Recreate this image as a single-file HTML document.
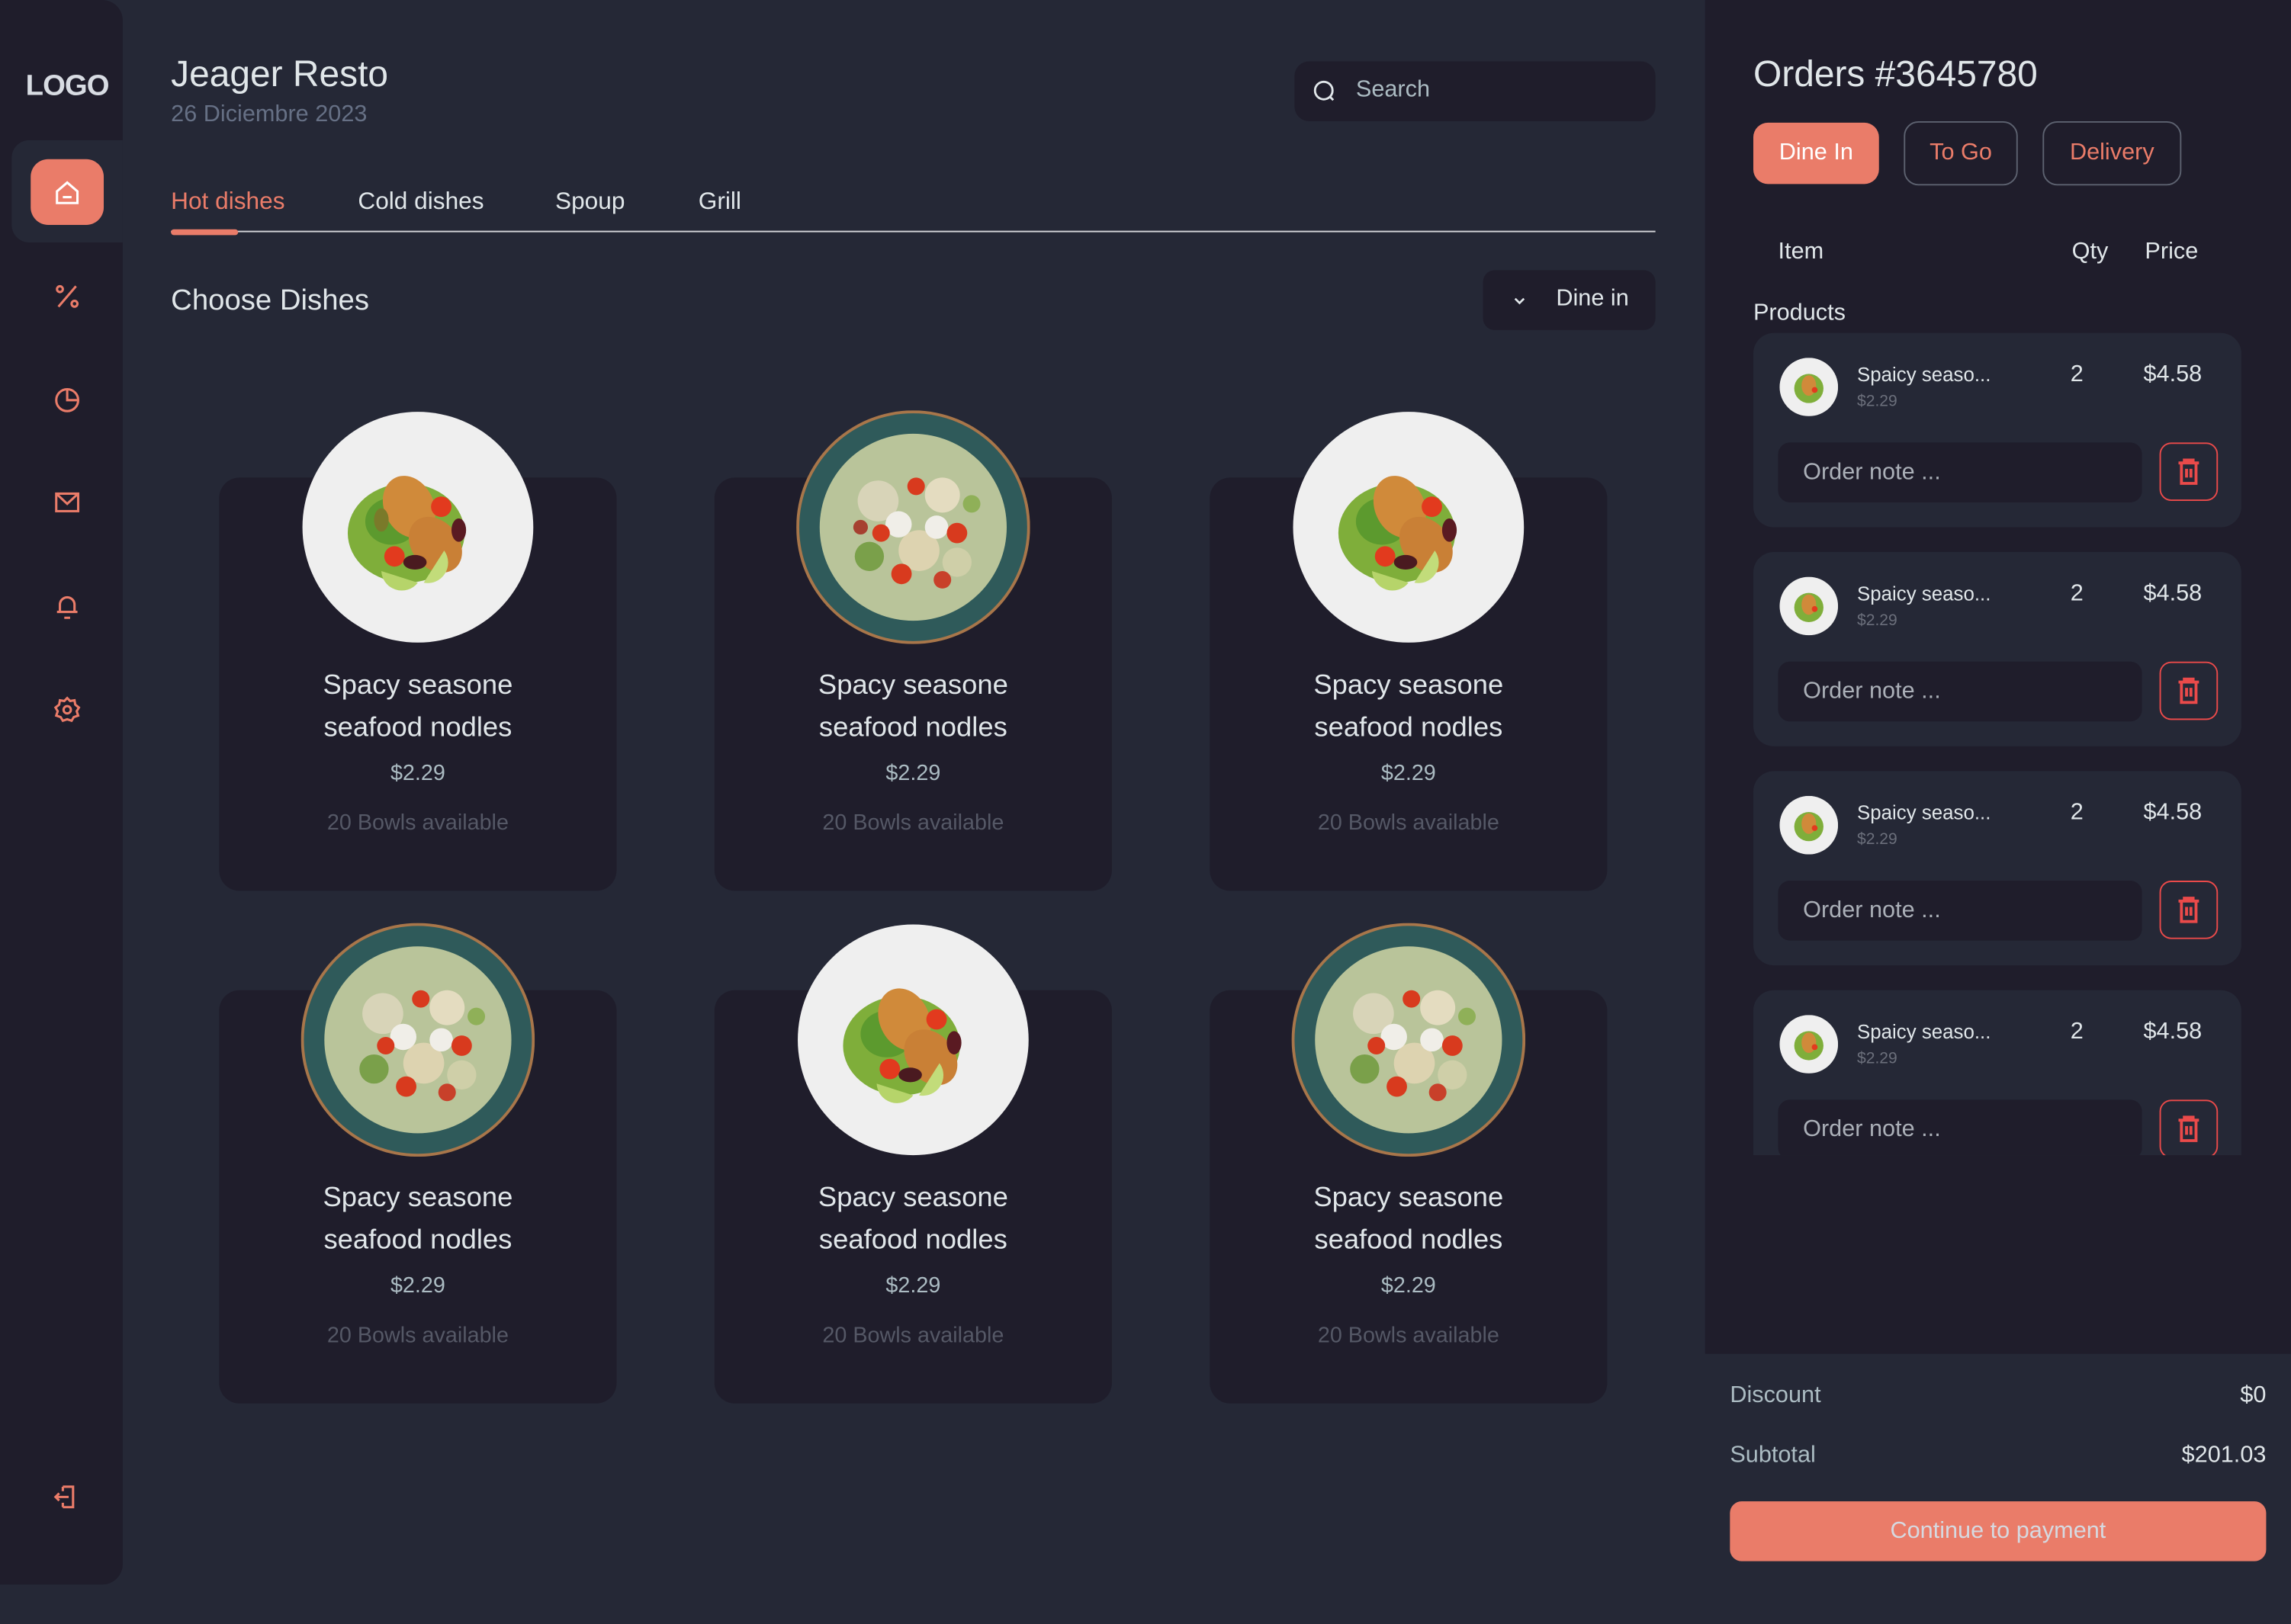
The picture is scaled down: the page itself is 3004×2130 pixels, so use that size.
<!DOCTYPE html>
<html><head><meta charset="utf-8"><style>
*{margin:0;padding:0;box-sizing:border-box}
html,body{width:3004px;height:2130px;overflow:hidden;background:#252836}
#w{position:absolute;left:0;top:0;width:1568px;height:1112px;transform:scale(1.91582,1.91547);transform-origin:0 0;font-family:"Liberation Sans",sans-serif;color:#e0e6e9;background:#252836}
.a{position:absolute}
.side{left:0;top:0;width:84px;height:1085px;background:#1f1d2b;border-radius:0 14px 14px 0}
.ic{position:absolute;left:36px;width:20px;height:20px}
.card{position:absolute;width:272px;height:283px;background:#1f1d2b;border-radius:14px}
.plate{position:absolute;width:160px;height:160px;left:56px;top:-46px}
.t{position:absolute;left:0;width:100%;text-align:center}
.t1{top:128px;font-size:19px;line-height:29px;color:#e0e6e9}
.t2{top:194px;font-size:15px;color:#abbbc2}
.t3{top:228px;font-size:15px;color:#555866}
.oc{position:absolute;left:1200px;width:334px;height:133px;background:#252836;border-radius:14px}
.oc .th{position:absolute;left:18px;top:17px;width:40px;height:40px}
.oc .n{position:absolute;left:71px;top:21px;font-size:13.5px;color:#e0e6e9}
.oc .p{position:absolute;left:71px;top:41px;font-size:11px;color:#6b6f7b}
.oc .q{position:absolute;left:217px;top:20px;font-size:16px}
.oc .pr{position:absolute;left:267px;top:20px;font-size:16px}
.oc .note{position:absolute;left:17px;top:75px;width:249px;height:41px;background:#1f1d2b;border-radius:8px;font-size:16px;color:#abb0b8;padding:12px 0 0 17px}
.oc .del{position:absolute;left:278px;top:75px;width:40px;height:40px;border:1px solid #ea4a4a;border-radius:8px}
</style></head><body><div id="w">

<div class="a side"></div>
<div class="a" style="left:0;top:48px;width:92px;text-align:center;font-weight:bold;font-size:20px;color:#d8dce3;letter-spacing:-0.5px">LOGO</div>
<div class="a" style="left:8px;top:96px;width:76px;height:70px;background:#252836;border-radius:12px 0 0 12px"></div>
<div class="a" style="left:21px;top:109px;width:50px;height:45px;background:#ea7c69;border-radius:12px"></div>
<svg class="a" style="left:36px;top:122px" width="20" height="20" viewBox="0 0 20 20" fill="none" stroke="#fff" stroke-width="1.6"><path d="M3 9 L10 3 L17 9 V17 H3 Z"/><path d="M7 13 H13"/></svg>
<svg class="ic" style="top:193px" viewBox="0 0 20 20" fill="none" stroke="#ea7c69" stroke-width="1.6"><circle cx="5" cy="5" r="2"/><circle cx="15" cy="15" r="2"/><path d="M16 3 L4 17"/></svg>
<svg class="ic" style="top:263px" viewBox="0 0 20 20" fill="none" stroke="#ea7c69" stroke-width="1.6"><circle cx="10" cy="11" r="7.5"/><path d="M10 3.5 V11 H17.5"/></svg>
<svg class="ic" style="top:334px" viewBox="0 0 20 20" fill="none" stroke="#ea7c69" stroke-width="1.6"><rect x="2.5" y="4" width="15" height="12"/><path d="M2.5 4 L10 11 L17.5 4"/></svg>
<svg class="ic" style="top:405px" viewBox="0 0 20 20" fill="none" stroke="#ea7c69" stroke-width="1.6"><path d="M5 14 V9 A5 5 0 0 1 15 9 V14 M3 14 H17 M8 18 H12"/></svg>
<svg class="ic" style="top:476px" viewBox="0 0 20 20" fill="none" stroke="#ea7c69" stroke-width="1.6"><path d="M10 2 L12 4 L15 3.5 L15.5 6.5 L18 8.5 L16.5 11 L17.5 14 L14.5 15 L13 17.5 L10 16.5 L7 17.5 L5.5 15 L2.5 14 L3.5 11 L2 8.5 L4.5 6.5 L5 3.5 L8 4 Z"/><circle cx="10" cy="10" r="2.5"/></svg>
<svg class="ic" style="top:1015px" viewBox="0 0 20 20" fill="none" stroke="#ea7c69" stroke-width="1.6"><path d="M7 3 H14 V17 H7 M7 6 V3 M7 14 V17 M2 10 H11 M4.5 7.5 L2 10 L4.5 12.5"/></svg>

<div class="a" style="left:117px;top:37px;font-size:25px;color:#e0e6e9">Jeager Resto</div>
<div class="a" style="left:117px;top:70px;font-size:16px;color:#667085">26 Diciembre 2023</div>
<div class="a" style="left:886px;top:42px;width:247px;height:41px;background:#1f1d2b;border-radius:10px"></div>
<svg class="a" style="left:898px;top:54px" width="18" height="18" viewBox="0 0 18 18" fill="none" stroke="#e0e6e9" stroke-width="1.5"><circle cx="8" cy="8" r="6"/><path d="M12.5 12.5 L14.5 14.5"/></svg>
<div class="a" style="left:928px;top:53px;font-size:16px;color:#abbbc2">Search</div>

<div class="a" style="left:117px;top:129px;font-size:16.5px;color:#ea7c69">Hot dishes</div>
<div class="a" style="left:245px;top:129px;font-size:16.5px">Cold dishes</div>
<div class="a" style="left:380px;top:129px;font-size:16.5px">Spoup</div>
<div class="a" style="left:478px;top:129px;font-size:16.5px">Grill</div>
<div class="a" style="left:117px;top:158px;width:1016px;height:1px;background:#d5d6da"></div>
<div class="a" style="left:117px;top:157px;width:46px;height:4px;background:#ea7c69;border-radius:2px"></div>

<div class="a" style="left:117px;top:195px;font-size:20px">Choose Dishes</div>
<div class="a" style="left:1015px;top:185px;width:118px;height:41px;background:#1f1d2b;border-radius:8px"></div>
<svg class="a" style="left:1034px;top:200px" width="12" height="12" viewBox="0 0 12 12" fill="none" stroke="#e0e6e9" stroke-width="1.4"><path d="M3 4.5 L6 7.5 L9 4.5"/></svg>
<div class="a" style="left:1065px;top:196px;font-size:16px">Dine in</div>

<!-- cards -->
<div class="card" style="left:150px;top:327px">
<svg class="plate" viewBox="0 0 160 160"><circle cx="80" cy="80" r="79" fill="#efefef"/><ellipse cx="72" cy="84" rx="40" ry="34" fill="#7fae3a"/><ellipse cx="62" cy="76" rx="18" ry="16" fill="#5c9a2e"/><ellipse cx="74" cy="66" rx="17" ry="22" fill="#d08a3a" transform="rotate(-25 74 66)"/><ellipse cx="92" cy="92" rx="16" ry="21" fill="#c98036" transform="rotate(-40 92 92)"/><circle cx="96" cy="66" r="7" fill="#e23a1e"/><circle cx="64" cy="100" r="7" fill="#e23a1e"/><ellipse cx="108" cy="82" rx="5" ry="8" fill="#5a1a22"/><ellipse cx="78" cy="104" rx="8" ry="5" fill="#4a1a20"/><path d="M55 110 A14 14 0 0 0 80 118 Z" fill="#b6d46a"/><path d="M84 118 A14 14 0 0 0 98 96 Z" fill="#c2dc7a"/><ellipse cx="55" cy="75" rx="5" ry="8" fill="#7a7a2a"/></svg>
<div class="t t1">Spacy seasone<br>seafood nodles</div><div class="t t2">$2.29</div><div class="t t3">20 Bowls available</div></div>

<div class="card" style="left:489px;top:327px">
<svg class="plate" viewBox="0 0 160 160"><circle cx="80" cy="80" r="80" fill="#a8764a"/><circle cx="80" cy="80" r="78" fill="#2f5a5a"/><circle cx="80" cy="80" r="64" fill="#b9c49a"/><circle cx="56" cy="62" r="14" fill="#d8d4b8"/><circle cx="100" cy="58" r="12" fill="#e4dcc0"/><circle cx="84" cy="96" r="14" fill="#ddd3b0"/><circle cx="50" cy="100" r="10" fill="#7aa04a"/><circle cx="110" cy="104" r="10" fill="#cfcfa8"/><circle cx="70" cy="78" r="9" fill="#f0eee8"/><circle cx="96" cy="80" r="8" fill="#f0eee8"/><circle cx="58" cy="84" r="6" fill="#d83a1e"/><circle cx="110" cy="84" r="7" fill="#d83a1e"/><circle cx="82" cy="52" r="6" fill="#d83a1e"/><circle cx="72" cy="112" r="7" fill="#d83a1e"/><circle cx="100" cy="116" r="6" fill="#c8402a"/><circle cx="44" cy="80" r="5" fill="#a64030"/><circle cx="120" cy="64" r="6" fill="#8fb058"/></svg>
<div class="t t1">Spacy seasone<br>seafood nodles</div><div class="t t2">$2.29</div><div class="t t3">20 Bowls available</div></div>

<div class="card" style="left:828px;top:327px">
<svg class="plate" viewBox="0 0 160 160"><circle cx="80" cy="80" r="79" fill="#efefef"/><ellipse cx="72" cy="84" rx="40" ry="34" fill="#7fae3a"/><ellipse cx="62" cy="76" rx="18" ry="16" fill="#5c9a2e"/><ellipse cx="74" cy="66" rx="17" ry="22" fill="#d08a3a" transform="rotate(-25 74 66)"/><ellipse cx="92" cy="92" rx="16" ry="21" fill="#c98036" transform="rotate(-40 92 92)"/><circle cx="96" cy="66" r="7" fill="#e23a1e"/><circle cx="64" cy="100" r="7" fill="#e23a1e"/><ellipse cx="108" cy="82" rx="5" ry="8" fill="#5a1a22"/><ellipse cx="78" cy="104" rx="8" ry="5" fill="#4a1a20"/><path d="M55 110 A14 14 0 0 0 80 118 Z" fill="#b6d46a"/><path d="M84 118 A14 14 0 0 0 98 96 Z" fill="#c2dc7a"/></svg>
<div class="t t1">Spacy seasone<br>seafood nodles</div><div class="t t2">$2.29</div><div class="t t3">20 Bowls available</div></div>

<div class="card" style="left:150px;top:678px">
<svg class="plate" viewBox="0 0 160 160"><circle cx="80" cy="80" r="80" fill="#a8764a"/><circle cx="80" cy="80" r="78" fill="#2f5a5a"/><circle cx="80" cy="80" r="64" fill="#b9c49a"/><circle cx="56" cy="62" r="14" fill="#d8d4b8"/><circle cx="100" cy="58" r="12" fill="#e4dcc0"/><circle cx="84" cy="96" r="14" fill="#ddd3b0"/><circle cx="50" cy="100" r="10" fill="#7aa04a"/><circle cx="110" cy="104" r="10" fill="#cfcfa8"/><circle cx="70" cy="78" r="9" fill="#f0eee8"/><circle cx="96" cy="80" r="8" fill="#f0eee8"/><circle cx="58" cy="84" r="6" fill="#d83a1e"/><circle cx="110" cy="84" r="7" fill="#d83a1e"/><circle cx="82" cy="52" r="6" fill="#d83a1e"/><circle cx="72" cy="112" r="7" fill="#d83a1e"/><circle cx="100" cy="116" r="6" fill="#c8402a"/><circle cx="120" cy="64" r="6" fill="#8fb058"/></svg>
<div class="t t1">Spacy seasone<br>seafood nodles</div><div class="t t2">$2.29</div><div class="t t3">20 Bowls available</div></div>

<div class="card" style="left:489px;top:678px">
<svg class="plate" viewBox="0 0 160 160"><circle cx="80" cy="80" r="79" fill="#efefef"/><ellipse cx="72" cy="84" rx="40" ry="34" fill="#7fae3a"/><ellipse cx="62" cy="76" rx="18" ry="16" fill="#5c9a2e"/><ellipse cx="74" cy="66" rx="17" ry="22" fill="#d08a3a" transform="rotate(-25 74 66)"/><ellipse cx="92" cy="92" rx="16" ry="21" fill="#c98036" transform="rotate(-40 92 92)"/><circle cx="96" cy="66" r="7" fill="#e23a1e"/><circle cx="64" cy="100" r="7" fill="#e23a1e"/><ellipse cx="108" cy="82" rx="5" ry="8" fill="#5a1a22"/><ellipse cx="78" cy="104" rx="8" ry="5" fill="#4a1a20"/><path d="M55 110 A14 14 0 0 0 80 118 Z" fill="#b6d46a"/><path d="M84 118 A14 14 0 0 0 98 96 Z" fill="#c2dc7a"/></svg>
<div class="t t1">Spacy seasone<br>seafood nodles</div><div class="t t2">$2.29</div><div class="t t3">20 Bowls available</div></div>

<div class="card" style="left:828px;top:678px">
<svg class="plate" viewBox="0 0 160 160"><circle cx="80" cy="80" r="80" fill="#a8764a"/><circle cx="80" cy="80" r="78" fill="#2f5a5a"/><circle cx="80" cy="80" r="64" fill="#b9c49a"/><circle cx="56" cy="62" r="14" fill="#d8d4b8"/><circle cx="100" cy="58" r="12" fill="#e4dcc0"/><circle cx="84" cy="96" r="14" fill="#ddd3b0"/><circle cx="50" cy="100" r="10" fill="#7aa04a"/><circle cx="110" cy="104" r="10" fill="#cfcfa8"/><circle cx="70" cy="78" r="9" fill="#f0eee8"/><circle cx="96" cy="80" r="8" fill="#f0eee8"/><circle cx="58" cy="84" r="6" fill="#d83a1e"/><circle cx="110" cy="84" r="7" fill="#d83a1e"/><circle cx="82" cy="52" r="6" fill="#d83a1e"/><circle cx="72" cy="112" r="7" fill="#d83a1e"/><circle cx="100" cy="116" r="6" fill="#c8402a"/><circle cx="120" cy="64" r="6" fill="#8fb058"/></svg>
<div class="t t1">Spacy seasone<br>seafood nodles</div><div class="t t2">$2.29</div><div class="t t3">20 Bowls available</div></div>

<!-- right panel -->
<div class="a" style="left:1167px;top:0;width:401px;height:927px;background:#1f1d2b"></div>
<div class="a" style="left:1200px;top:37px;font-size:25px">Orders #3645780</div>
<div class="a" style="left:1200px;top:84px;width:86px;height:42px;background:#ea7c69;border-radius:10px;color:#fff;font-size:16px;text-align:center;line-height:42px">Dine In</div>
<div class="a" style="left:1303px;top:83px;width:78px;height:44px;border:1px solid #5d6270;border-radius:10px;color:#ea7c69;font-size:16px;text-align:center;line-height:42px">To Go</div>
<div class="a" style="left:1398px;top:83px;width:95px;height:44px;border:1px solid #5d6270;border-radius:10px;color:#ea7c69;font-size:16px;text-align:center;line-height:42px">Delivery</div>
<div class="a" style="left:1217px;top:164px;font-size:16px">Item</div>
<div class="a" style="left:1418px;top:164px;font-size:16px">Qty</div>
<div class="a" style="left:1468px;top:164px;font-size:16px">Price</div>
<div class="a" style="left:1200px;top:206px;font-size:16px">Products</div>

<div class="a" style="left:0;top:0;width:1568px;height:791px;overflow:hidden">
<div class="oc" style="top:228px"><svg class="th" viewBox="0 0 40 40"><circle cx="20" cy="20" r="20" fill="#efefef"/><circle cx="20" cy="21" r="10" fill="#7fae3a"/><ellipse cx="20" cy="19" rx="5" ry="7" fill="#d08a3a"/><circle cx="24" cy="22" r="2" fill="#e23a1e"/></svg><div class="n">Spaicy seaso...</div><div class="p">$2.29</div><div class="q">2</div><div class="pr">$4.58</div><div class="note">Order note ...</div><div class="del"><svg width="38" height="38" viewBox="0 0 38 38" fill="none" stroke="#ea4a4a" stroke-width="2"><path d="M12 13 H26 M16 13 V11 H22 V13 M14 13 V27 H24 V13 M17.5 17 V23 M20.5 17 V23"/></svg></div></div>
<div class="oc" style="top:378px"><svg class="th" viewBox="0 0 40 40"><circle cx="20" cy="20" r="20" fill="#efefef"/><circle cx="20" cy="21" r="10" fill="#7fae3a"/><ellipse cx="20" cy="19" rx="5" ry="7" fill="#d08a3a"/><circle cx="24" cy="22" r="2" fill="#e23a1e"/></svg><div class="n">Spaicy seaso...</div><div class="p">$2.29</div><div class="q">2</div><div class="pr">$4.58</div><div class="note">Order note ...</div><div class="del"><svg width="38" height="38" viewBox="0 0 38 38" fill="none" stroke="#ea4a4a" stroke-width="2"><path d="M12 13 H26 M16 13 V11 H22 V13 M14 13 V27 H24 V13 M17.5 17 V23 M20.5 17 V23"/></svg></div></div>
<div class="oc" style="top:528px"><svg class="th" viewBox="0 0 40 40"><circle cx="20" cy="20" r="20" fill="#efefef"/><circle cx="20" cy="21" r="10" fill="#7fae3a"/><ellipse cx="20" cy="19" rx="5" ry="7" fill="#d08a3a"/><circle cx="24" cy="22" r="2" fill="#e23a1e"/></svg><div class="n">Spaicy seaso...</div><div class="p">$2.29</div><div class="q">2</div><div class="pr">$4.58</div><div class="note">Order note ...</div><div class="del"><svg width="38" height="38" viewBox="0 0 38 38" fill="none" stroke="#ea4a4a" stroke-width="2"><path d="M12 13 H26 M16 13 V11 H22 V13 M14 13 V27 H24 V13 M17.5 17 V23 M20.5 17 V23"/></svg></div></div>
<div class="oc" style="top:678px"><svg class="th" viewBox="0 0 40 40"><circle cx="20" cy="20" r="20" fill="#efefef"/><circle cx="20" cy="21" r="10" fill="#7fae3a"/><ellipse cx="20" cy="19" rx="5" ry="7" fill="#d08a3a"/><circle cx="24" cy="22" r="2" fill="#e23a1e"/></svg><div class="n">Spaicy seaso...</div><div class="p">$2.29</div><div class="q">2</div><div class="pr">$4.58</div><div class="note">Order note ...</div><div class="del"><svg width="38" height="38" viewBox="0 0 38 38" fill="none" stroke="#ea4a4a" stroke-width="2"><path d="M12 13 H26 M16 13 V11 H22 V13 M14 13 V27 H24 V13 M17.5 17 V23 M20.5 17 V23"/></svg></div></div>
</div>

<div class="a" style="left:1184px;top:947px;font-size:16px;color:#abbbc2">Discount</div>
<div class="a" style="left:1400px;top:947px;width:151px;text-align:right;font-size:16px">$0</div>
<div class="a" style="left:1184px;top:988px;font-size:16px;color:#abbbc2">Subtotal</div>
<div class="a" style="left:1400px;top:988px;width:151px;text-align:right;font-size:16px">$201.03</div>
<div class="a" style="left:1184px;top:1028px;width:367px;height:41px;background:#ea7c69;border-radius:8px;text-align:center;line-height:41px;font-size:16px;color:#d6d9e0">Continue to payment</div>
</div></body></html>
